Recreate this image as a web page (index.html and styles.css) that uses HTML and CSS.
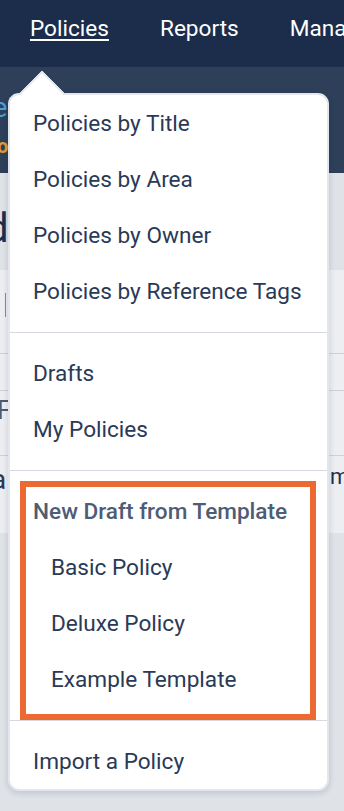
FILE: index.html
```html
<!DOCTYPE html>
<html lang="en">
<head>
<meta charset="utf-8">
<title>Policies menu</title>
<link rel="stylesheet" href="styles.css">
</head>
<body>
<header class="topnav">
  <a class="navlink active" href="#">Policies</a>
  <a class="navlink" href="#">Reports</a>
  <a class="navlink" href="#">Manage</a>
</header>

<section class="subbar">
  <div class="sub-title">eLibrary</div>
  <div class="sub-note">ooo</div>
</section>

<section class="titlebar">
  <h1 class="page-title">dashboard</h1>
</section>

<section class="table">
  <div class="row row-1"><span class="row-mark"></span></div>
  <div class="row row-2"></div>
  <div class="row row-3"><span class="cell-f">F</span></div>
  <div class="row row-4"><span class="cell-a">a</span><span class="cell-m">mmm</span></div>
</section>

<section class="lower-band"></section>

<nav class="menu">
  <span class="menu-caret"></span>
  <ul class="menu-group">
    <li class="menu-item">Policies by Title</li>
    <li class="menu-item">Policies by Area</li>
    <li class="menu-item">Policies by Owner</li>
    <li class="menu-item">Policies by Reference Tags</li>
  </ul>
  <hr class="menu-divider">
  <ul class="menu-group">
    <li class="menu-item">Drafts</li>
    <li class="menu-item">My Policies</li>
  </ul>
  <hr class="menu-divider">
  <div class="menu-group template-group">
    <div class="menu-item menu-heading">New Draft from Template</div>
    <ul class="sub-list">
      <li class="menu-item sub-item">Basic Policy</li>
      <li class="menu-item sub-item">Deluxe Policy</li>
      <li class="menu-item sub-item">Example Template</li>
    </ul>
    <span class="highlight-box"></span>
  </div>
  <hr class="menu-divider">
  <ul class="menu-group">
    <li class="menu-item">Import a Policy</li>
  </ul>
</nav>
</body>
</html>
```
FILE: styles.css
```css
* {
  box-sizing: border-box;
  margin: 0;
  padding: 0;
}

html, body {
  width: 344px;
  height: 811px;
  overflow: hidden;
}

body {
  position: relative;
  font-family: Roboto, "Liberation Sans", sans-serif;
  background: #dfe2e7;
}

/* top navigation */
.topnav {
  height: 67px;
  background: #1b2d4b;
  display: flex;
  gap: 51px;
  padding: 16px 0 0 30px;
  white-space: nowrap;
  overflow: hidden;
}

.navlink {
  color: #ffffff;
  font-size: 22.6px;
  line-height: 26px;
  text-decoration: none;
}

.navlink.active {
  text-decoration: underline;
  text-decoration-thickness: 2px;
  text-underline-offset: 3px;
}

/* dimmed page behind the menu */
.subbar {
  height: 106px;
  background: #2d3f59;
  padding-top: 25px;
  overflow: hidden;
  white-space: nowrap;
}

.sub-title {
  font-size: 27px;
  line-height: 32px;
  color: #4a9fdc;
  margin-left: -7px;
}

.sub-note {
  margin-top: 10px;
  font-size: 20px;
  line-height: 24px;
  font-weight: 700;
  color: #e39a33;
  margin-left: -3px;
}

.titlebar {
  height: 97px;
  background: #dfe2e7;
  padding-top: 32px;
  overflow: hidden;
  white-space: nowrap;
}

.page-title {
  font-size: 40px;
  line-height: 48px;
  font-weight: 400;
  color: #1d2f4c;
  margin-left: -14px;
}

.table {
  background: #eceef2;
}

.row {
  overflow: hidden;
  white-space: nowrap;
}

.row + .row {
  border-top: 1px solid #cdd2d9;
}

.row-1 {
  height: 83px;
  padding: 23px 0 0 5px;
}

.row-mark {
  display: block;
  width: 1px;
  height: 24px;
  background: #a9806f;
}

.row-2 {
  height: 37px;
}

.row-3 {
  height: 65px;
  padding-top: 4px;
}

.cell-f {
  display: block;
  font-size: 26px;
  line-height: 30px;
  color: #4e5a70;
  margin-left: -3px;
}

.row-4 {
  height: 78px;
  display: grid;
  grid-template-columns: 330px 1fr;
  align-items: start;
  padding-top: 8px;
}

.cell-a {
  font-size: 28px;
  line-height: 32px;
  color: #2a3a56;
  margin-left: -9px;
}

.cell-m {
  font-size: 22px;
  line-height: 26px;
  color: #22324e;
}

.lower-band {
  height: 278px;
  background: #dfe2e7;
}

/* dropdown menu */
.menu {
  position: absolute;
  left: 8px;
  top: 93px;
  width: 321px;
  background: #ffffff;
  border: 2px solid #e3e6eb;
  border-radius: 11px;
  box-shadow: 0 2px 6px rgba(20, 35, 60, 0.16);
  font-size: 22.6px;
  color: #2a3a56;
}

.menu-caret {
  position: absolute;
  left: 15.7px;
  top: -18px;
  width: 32px;
  height: 32px;
  background: #ffffff;
  border-top: 2px solid #e3e6eb;
  border-left: 2px solid #e3e6eb;
  transform: rotate(45deg);
  clip-path: polygon(0 0, 100% 0, 100% 12%, 12% 100%, 0 100%);
}

.menu-group {
  list-style: none;
}

.menu-item {
  height: 56px;
  line-height: 58px;
  padding-left: 23px;
  white-space: nowrap;
}

.menu-divider {
  border: 0;
  height: 1px;
  background: #d5d9df;
  margin: 13px 0 12px;
}

.template-group {
  position: relative;
}

.menu-heading {
  font-weight: 500;
  color: #4e5c74;
}

.sub-list {
  list-style: none;
}

.sub-item {
  padding-left: 41px;
}

.highlight-box {
  position: absolute;
  left: 10px;
  right: 11px;
  top: -2px;
  bottom: -13px;
  border: 6px solid #ea6a32;
  pointer-events: none;
}
```
